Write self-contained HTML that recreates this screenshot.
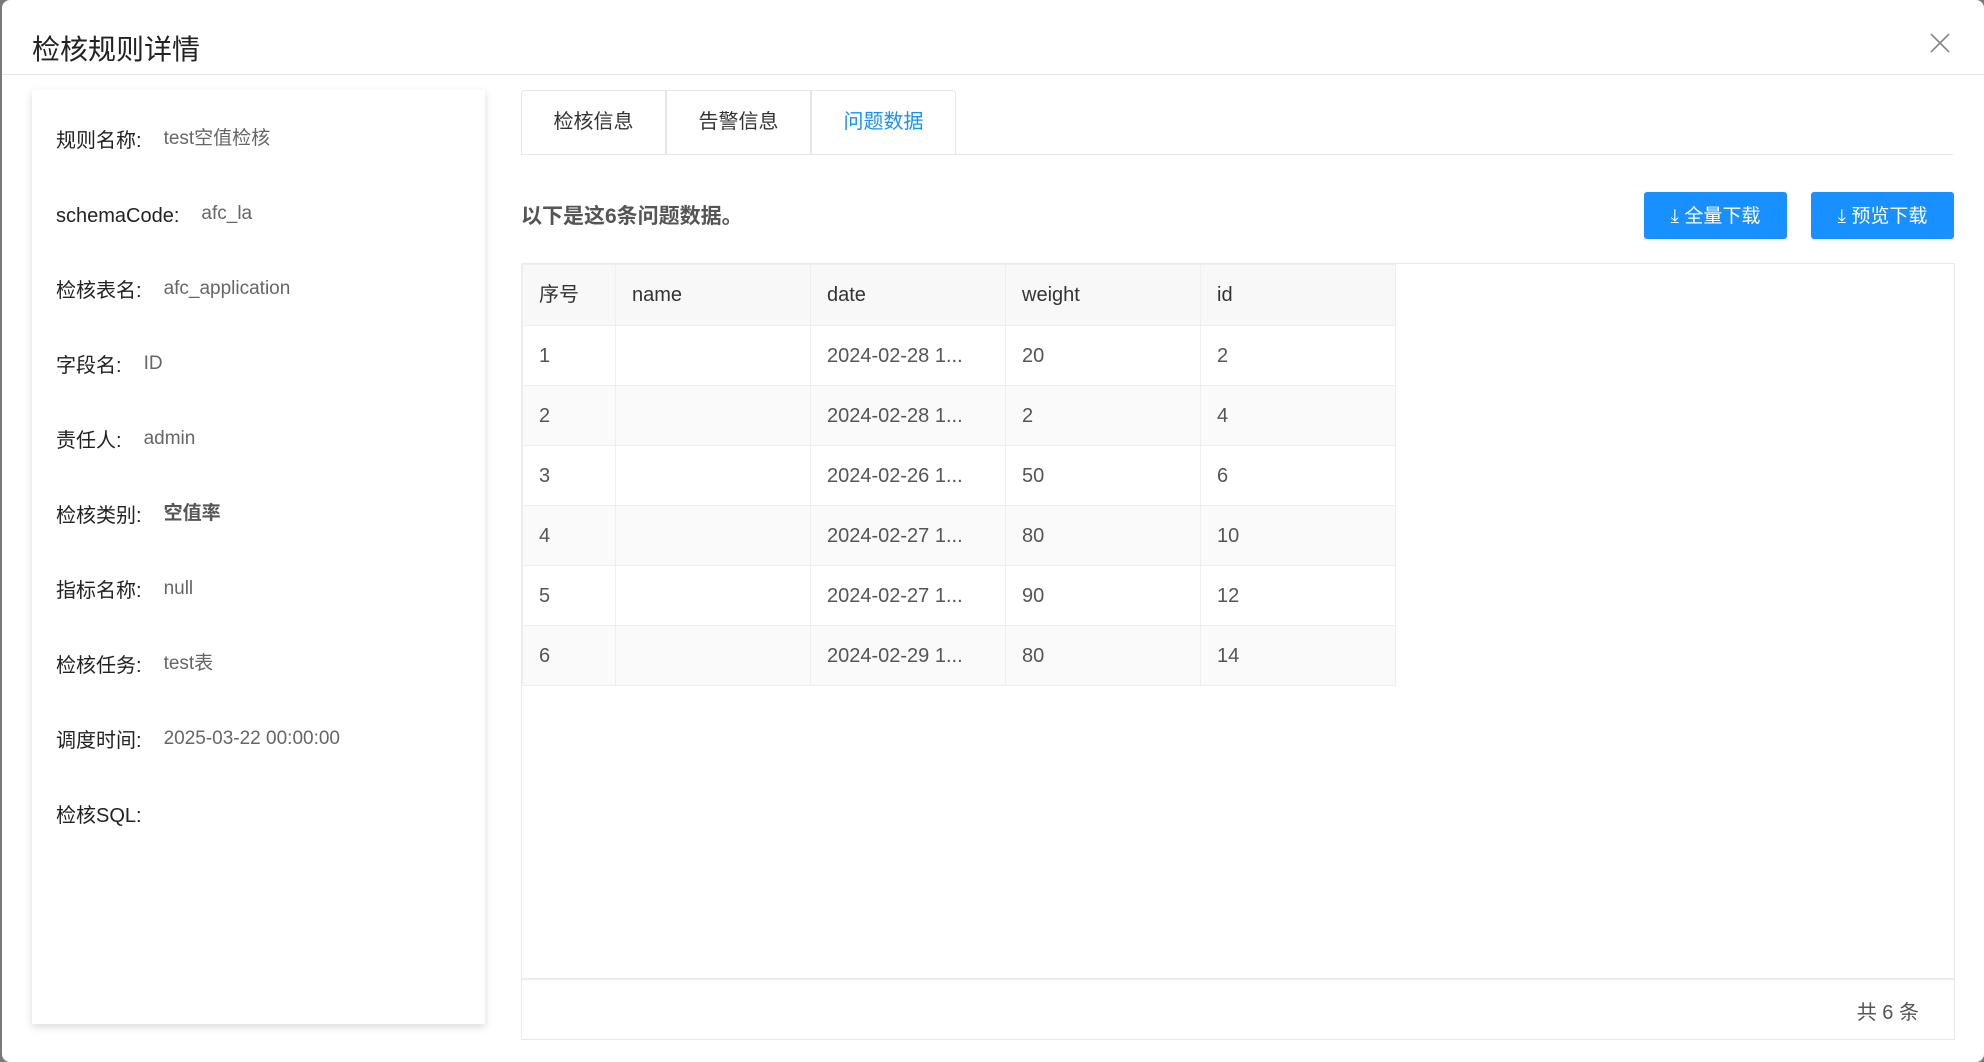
<!DOCTYPE html>
<html><head><meta charset="utf-8"><style>
*{box-sizing:border-box;margin:0;padding:0}
html,body{width:1984px;height:1062px;overflow:hidden;background:#7a7a7a;font-family:"Liberation Sans","Noto Sans CJK SC",sans-serif}
.dlg{position:absolute;left:2px;top:0;width:1982px;height:1062px;background:#fff;border-radius:8px}
.title{position:absolute;left:30px;top:32px;font-size:28px;color:#222;line-height:36px}
.hline{position:absolute;left:0;top:74px;width:1982px;height:1px;background:#e6e6ea}
.close{position:absolute;left:1927px;top:32px}
.card{position:absolute;left:30px;top:90px;width:453px;height:934px;background:#fff;box-shadow:0 3px 8px rgba(0,0,0,.15)}
.row{position:absolute;left:24px;font-size:20px;color:#222;white-space:nowrap;line-height:28px;height:28px}
.row span{color:#666;font-size:19px;margin-left:22px;position:relative;top:-3px}
.tabs{position:absolute;left:519px;top:90px;width:1432px;height:65px;border-bottom:1px solid #e4e7ed}
.tab{position:absolute;top:0;height:64px;width:145px;border:1px solid #e4e7ed;border-bottom:none;font-size:20px;color:#333;text-align:center;line-height:62px;background:#fff}
.msg{position:absolute;left:519px;top:203px;font-size:21px;font-weight:bold;color:#555;line-height:28px}
.btn{position:absolute;top:192px;height:47px;width:143px;background:#1890ff;border-radius:3px;color:#fff;font-size:19px;line-height:50px;text-align:center}
.tbl{position:absolute;left:519px;top:263px;width:1434px;height:777px;border:1px solid #e8eaee}
.foot{position:absolute;left:0;top:714px;width:1432px;height:2px;background:#e8edf2}
.cnt{position:absolute;right:35px;top:735px;font-size:20px;color:#555;line-height:28px}
table{position:absolute;left:0;top:0;border-collapse:collapse}
td{border:1px solid #eceef3;height:60px;font-size:20px;color:#555;padding-left:16px;vertical-align:middle;line-height:24px}
tr.h td{background:#f8f8f8;color:#333;height:61px}
tr.g td{background:#fafafa}
</style></head><body>
<div class="dlg">
<div class="title">检核规则详情</div>
<div class="hline"></div>
<svg class="close" width="22" height="22" viewBox="0 0 22 22"><path d="M2 2L20 20M20 2L2 20" stroke="#888" stroke-width="1.6"/></svg>
<div class="card">
<div class="row" style="top:37px">规则名称:<span>test空值检核</span></div>
<div class="row" style="top:112px">schemaCode:<span>afc_la</span></div>
<div class="row" style="top:187px">检核表名:<span>afc_application</span></div>
<div class="row" style="top:262px">字段名:<span>ID</span></div>
<div class="row" style="top:337px">责任人:<span>admin</span></div>
<div class="row" style="top:412px">检核类别:<span style="font-weight:bold;color:#555">空值率</span></div>
<div class="row" style="top:487px">指标名称:<span>null</span></div>
<div class="row" style="top:562px">检核任务:<span>test表</span></div>
<div class="row" style="top:637px">调度时间:<span>2025-03-22 00:00:00</span></div>
<div class="row" style="top:712px">检核SQL:</div>
</div>
<div class="tabs">
<div class="tab" style="left:0;border-radius:4px 0 0 0">检核信息</div>
<div class="tab" style="left:145px">告警信息</div>
<div class="tab" style="left:290px;color:#1890ff;border-radius:0 4px 0 0">问题数据</div>
</div>
<div class="msg">以下是这6条问题数据。</div>
<div class="btn" style="left:1642px">⤓ 全量下载</div>
<div class="btn" style="left:1809px">⤓ 预览下载</div>
<div class="tbl">
<table>
<tr class="h"><td style="width:93px">序号</td><td style="width:195px">name</td><td style="width:195px">date</td><td style="width:195px">weight</td><td style="width:195px">id</td></tr>
<tr><td>1</td><td></td><td>2024-02-28 1...</td><td>20</td><td>2</td></tr>
<tr class="g"><td>2</td><td></td><td>2024-02-28 1...</td><td>2</td><td>4</td></tr>
<tr><td>3</td><td></td><td>2024-02-26 1...</td><td>50</td><td>6</td></tr>
<tr class="g"><td>4</td><td></td><td>2024-02-27 1...</td><td>80</td><td>10</td></tr>
<tr><td>5</td><td></td><td>2024-02-27 1...</td><td>90</td><td>12</td></tr>
<tr class="g"><td>6</td><td></td><td>2024-02-29 1...</td><td>80</td><td>14</td></tr>
</table>
<div class="foot"></div>
<div class="cnt">共 6 条</div>
</div>
</div>
</body></html>
